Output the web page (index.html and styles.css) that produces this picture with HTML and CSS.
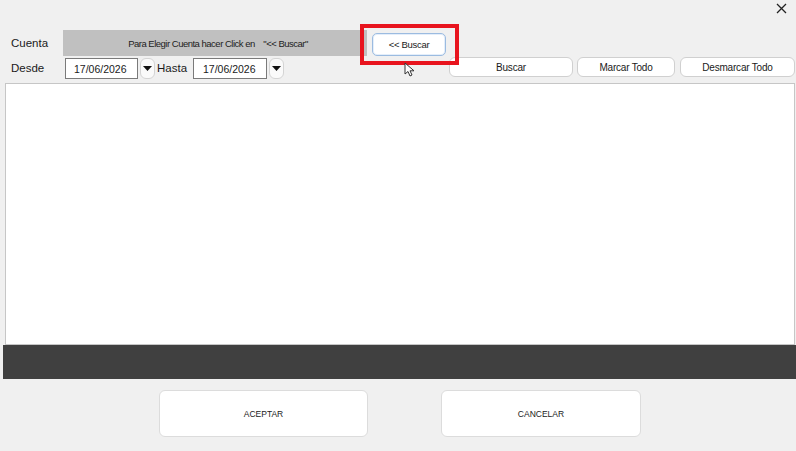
FILE: index.html
```html
<!DOCTYPE html>
<html lang="es">
<head>
    <meta charset="UTF-8">
    <meta name="viewport" content="width=device-width, initial-scale=1.0">
    <title>Seleccionar Cuenta</title>
    <link rel="stylesheet" href="styles.css">
</head>
<body>
    <div class="window">
        <div class="titlebar">
            <svg class="close" width="11" height="11" viewBox="0 0 11 11">
                <path d="M1 1 L10 10 M10 1 L1 10" stroke="#222" stroke-width="1.3" fill="none"/>
            </svg>
        </div>

        <div class="row row-cuenta">
            <span class="label">Cuenta</span>
            <div class="cuenta-bar">Para Elegir Cuenta hacer Click en &nbsp;&nbsp;&nbsp;"&lt;&lt; Buscar"</div>
            <div class="pick-wrap">
                <button class="btn btn-pick">&lt;&lt; Buscar</button>
                <span class="highlight"></span>
                <svg class="cursor" width="12" height="16" viewBox="0 0 12 16">
                    <path d="M1 1 L1 12 L4 9.5 L6 14 L8 13 L6 8.8 L10 8.8 Z" fill="#fff" stroke="#333" stroke-width="1"/>
                </svg>
            </div>
        </div>

        <div class="row row-fechas">
            <span class="label">Desde</span>
            <div class="date-input">17/06/2026</div>
            <span class="drop"><svg width="9" height="5" viewBox="0 0 9 5"><path d="M0 0 L9 0 L4.5 5 Z" fill="#111"/></svg></span>
            <span class="label label-hasta">Hasta</span>
            <div class="date-input date-hasta">17/06/2026</div>
            <span class="drop"><svg width="9" height="5" viewBox="0 0 9 5"><path d="M0 0 L9 0 L4.5 5 Z" fill="#111"/></svg></span>
            <div class="actions">
                <button class="btn btn-buscar">Buscar</button>
                <button class="btn btn-marcar">Marcar Todo</button>
                <button class="btn btn-desmarcar">Desmarcar Todo</button>
            </div>
        </div>

        <div class="grid-area"></div>
        <div class="status-bar"></div>

        <div class="footer">
            <button class="btn big-btn btn-aceptar">ACEPTAR</button>
            <button class="btn big-btn btn-cancelar">CANCELAR</button>
        </div>
    </div>
</body>
</html>
```

FILE: styles.css
```css
body {
    margin: 0;
    background: #f0f0f0;
    font-family: "Liberation Sans", Arial, sans-serif;
    color: #1a1a1a;
}
.window {
    width: 796px;
    height: 451px;
    overflow: hidden;
}
.titlebar {
    height: 30px;
    display: flex;
    justify-content: flex-end;
    align-items: flex-start;
}
.close {
    margin-top: 3px;
    margin-right: 9px;
}
.row {
    display: flex;
    align-items: center;
}
.label {
    font-size: 11.5px;
    box-sizing: border-box;
    padding-left: 11px;
    width: 65px;
}
.row-cuenta {
    height: 26px;
}
.row-cuenta .label {
    width: 63px;
}
.cuenta-bar {
    width: 304px;
    height: 26px;
    background: #c0c0c0;
    font-size: 9.5px;
    letter-spacing: -0.5px;
    display: flex;
    align-items: center;
    justify-content: center;
    padding-left: 6px;
    box-sizing: border-box;
    color: #222;
}
.pick-wrap {
    position: relative;
    margin-left: 5px;
    margin-top: 2px;
}
.btn {
    font-family: "Liberation Sans", Arial, sans-serif;
    background: #ffffff;
    border: 1px solid #d0d0d0;
    border-radius: 6px;
    color: #1a1a1a;
    font-size: 10px;
    padding: 0;
    cursor: pointer;
}
.btn-pick {
    width: 74px;
    height: 23px;
    border: 1px solid #9bbbe0;
    border-radius: 5px;
    box-shadow: inset 0 0 0 1px #e4eefa;
    font-size: 9.5px;
    letter-spacing: -0.3px;
}
.highlight {
    position: absolute;
    left: -12px;
    top: -9px;
    width: 91px;
    height: 33px;
    border: 4px solid #e8141e;
    pointer-events: none;
}
.cursor {
    position: absolute;
    left: 32px;
    top: 29px;
}
.row-fechas {
    height: 22px;
    margin-top: 1px;
}
.date-input {
    box-sizing: border-box;
    width: 73px;
    height: 21px;
    margin-top: 1px;
    border: 1px solid #7a7a7a;
    background: #ffffff;
    font-size: 10.5px;
    display: flex;
    align-items: center;
    padding-left: 8px;
}
.date-hasta {
    width: 74px;
    padding-left: 9px;
}
.drop {
    box-sizing: border-box;
    width: 15px;
    height: 21px;
    margin-left: 2px;
    margin-top: 1px;
    background: #fafafa;
    border: 1px solid #d4d4d4;
    border-radius: 6px;
    display: flex;
    align-items: center;
    justify-content: center;
}
.label-hasta {
    width: 36px;
    padding-left: 0;
    margin-left: 2px;
}
.actions {
    margin-left: auto;
    margin-right: 1px;
    display: flex;
    align-self: flex-start;
}
.actions .btn {
    height: 20px;
    letter-spacing: -0.2px;
}
.btn-buscar {
    width: 124px;
}
.btn-marcar {
    width: 98px;
    margin-left: 4px;
}
.btn-desmarcar {
    width: 115px;
    margin-left: 5px;
}
.grid-area {
    box-sizing: border-box;
    height: 262px;
    margin: 4px 1px 0 5px;
    background: #ffffff;
    border: 1px solid #c6c6c6;
}
.status-bar {
    height: 34px;
    margin-left: 3px;
    background: #404040;
}
.footer {
    display: flex;
    padding-top: 11px;
    padding-left: 159px;
    gap: 73px;
}
.big-btn {
    height: 47px;
    font-size: 8.5px;
    border: 1px solid #dcdcdc;
    border-radius: 6px;
}
.btn-aceptar {
    width: 209px;
}
.btn-cancelar {
    width: 200px;
}
```
